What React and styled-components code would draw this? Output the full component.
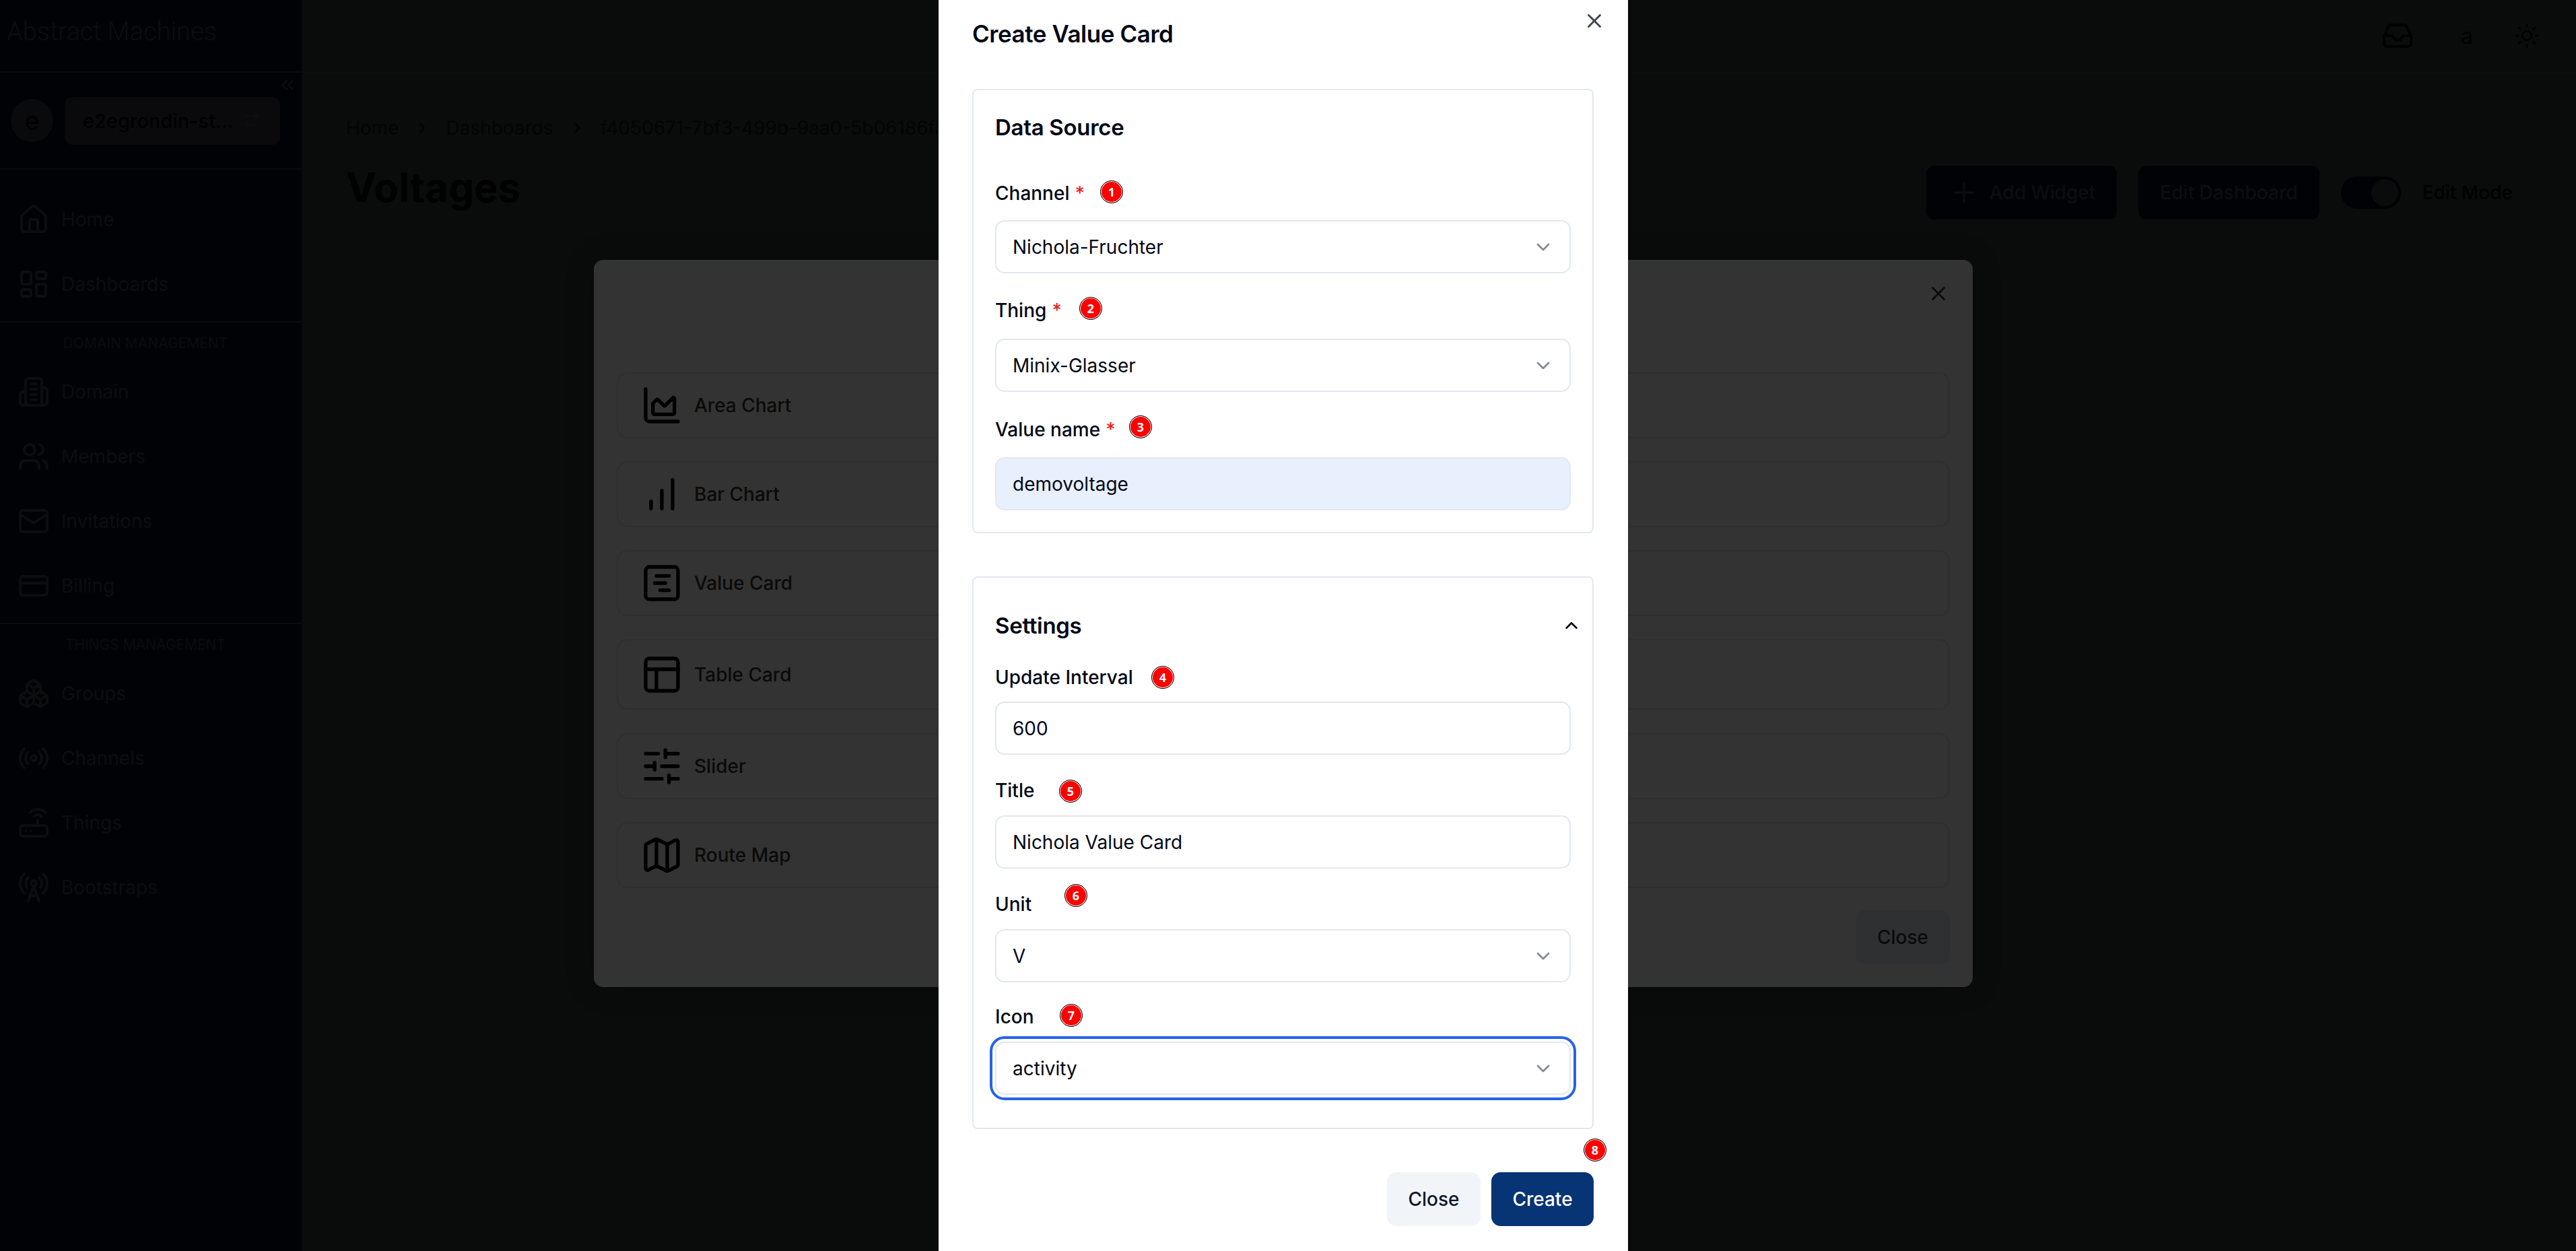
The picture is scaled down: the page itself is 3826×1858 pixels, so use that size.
import React from 'react';
import styled, { createGlobalStyle } from 'styled-components';
import {
  House, LayoutDashboard, Users, Mail, CreditCard, Boxes, Radio, Router, RadioTower, ChevronsLeft, ArrowRightLeft,
  Inbox, Sun, Plus, X, ChevronDown, ChevronUp, ChevronRight, ChartArea, SquareChartGantt,
  PanelsTopLeft, SlidersHorizontal, Map as MapIcon,
} from 'lucide-react';

const Global = createGlobalStyle`
  html, body { margin: 0; padding: 0; background: #0a0a0a; }
  * { box-sizing: border-box; }
  body { font-family: Inter, "Noto Sans", sans-serif; }
`;

const Shell = styled.div`
  position: relative;
  display: grid;
  grid-template-columns: 448px 1fr;
  width: 3826px;
  height: 1858px;
  overflow: hidden;
  background: #0a0b0b;
`;

/* ---------- sidebar ---------- */
const Sidebar = styled.aside`
  display: flex;
  flex-direction: column;
  background: #010206;
  color: #0c0d0f;
`;
const Brand = styled.div`
  height: 108px;
  padding: 23px 0 0 10px;
  border-bottom: 2px solid #0a0b0e;
  font-family: Roboto, sans-serif;
  font-size: 38px;
  font-weight: 300;
  line-height: 48px;
  white-space: nowrap;
  color: #0c0d0f;
`;
const CollapseRow = styled.div`
  display: flex;
  justify-content: flex-end;
  height: 36px;
  padding: 3px 6px 0 0;
`;
const Workspace = styled.div`
  display: flex;
  align-items: center;
  gap: 17px;
  height: 108px;
  padding: 0 32px 36px 16px;
  border-bottom: 2px solid #0a0b0e;
`;
const Avatar = styled.div`
  display: flex;
  align-items: center;
  justify-content: center;
  flex: none;
  width: 63px;
  height: 64px;
  border-radius: 50%;
  background: #0a0a0c;
  color: #000;
  font-size: 38px;
`;
const WorkspacePill = styled.div`
  display: flex;
  align-items: center;
  justify-content: space-between;
  flex: 1;
  height: 71px;
  padding: 0 28px 0 27px;
  border-radius: 12px;
  background: #0a0a0c;
  color: #000;
  font-size: 29px;
  font-weight: 500;
`;
const NavGroup = styled.nav`
  display: flex;
  flex-direction: column;
  padding: ${p => p.$top}px 0 ${p => p.$bottom}px;
  border-bottom: ${p => (p.$last ? 'none' : '2px solid #0a0b0e')};
`;
const NavItem = styled.div`
  display: flex;
  align-items: center;
  gap: 17px;
  height: 96px;
  padding-left: 26px;
  font-size: 28px;
  color: #0c0d0f;
`;
const NavHeading = styled.div`
  height: 32px;
  margin-bottom: 8px;
  text-align: center;
  font-size: 21px;
  line-height: 32px;
  padding-right: 16px;
  color: #0a0b0d;
`;

/* ---------- page behind the dialogs ---------- */
const Main = styled.main`
  display: flex;
  flex-direction: column;
`;
const TopBar = styled.header`
  display: flex;
  align-items: center;
  justify-content: flex-end;
  gap: 60px;
  height: 108px;
  padding-right: 53px;
  border-bottom: 2px solid #0c0d0d;
  color: #000;
  font-size: 32px;
`;
const UserInitial = styled.span`
  margin-left: 10px;
`;
const Content = styled.div`
  padding: 64px 66px 0;
`;
const Breadcrumbs = styled.div`
  display: flex;
  align-items: center;
  gap: 22px;
  height: 36px;
  font-size: 28px;
  color: #030404;
  white-space: nowrap;
`;
const TitleRow = styled.div`
  display: flex;
  align-items: flex-start;
  justify-content: space-between;
  margin-top: 38px;
  padding-right: 28px;
`;
const PageTitle = styled.h1`
  margin: 0;
  font-size: 60px;
  line-height: 64px;
  font-weight: 700;
  color: #000;
`;
const Actions = styled.div`
  display: flex;
  align-items: center;
  gap: 32px;
`;
const DarkButton = styled.div`
  display: flex;
  align-items: center;
  gap: 14px;
  height: 80px;
  padding: 0 32px;
  border-radius: 12px;
  background: #010206;
  color: #0c0d0f;
  font-size: 28px;
  font-weight: 500;
`;
const ToggleTrack = styled.div`
  display: flex;
  align-items: center;
  justify-content: flex-end;
  width: 89px;
  height: 48px;
  padding: 4px;
  border-radius: 24px;
  background: #010206;
`;
const ToggleKnob = styled.div`
  width: 40px;
  height: 40px;
  border-radius: 50%;
  background: #0a0b0b;
`;
const ToggleLabel = styled.span`
  font-size: 28px;
  font-weight: 500;
  color: #000;
`;

/* ---------- first dialog (dimmed) ---------- */
const ChooserDialog = styled.section`
  position: absolute;
  left: 882px;
  top: 386px;
  display: flex;
  flex-direction: column;
  width: 2048px;
  height: 1080px;
  padding: 167px 34px 0;
  border-radius: 14px;
  background: #333;
  box-shadow: 0 0 40px rgba(0, 0, 0, 0.25);
`;
const ChooserClose = styled.div`
  position: absolute;
  top: 33px;
  right: 34px;
  display: flex;
  color: #0a0a0a;
`;
const ChooserList = styled.div`
  display: flex;
  flex-direction: column;
`;
const ChooserRow = styled.div`
  display: flex;
  align-items: center;
  gap: 16px;
  height: ${p => p.$h || 98}px;
  margin-bottom: ${p => p.$mb || 34}px;
  padding-left: 33px;
  border: 2px solid #2f2f2f;
  border-radius: 16px;
  font-size: 28px;
  font-weight: 450;
  color: #0a0a0a;
`;
const ChooserFooter = styled.div`
  display: flex;
  justify-content: flex-end;
  margin-top: -1px;
`;
const ChooserButton = styled.div`
  display: flex;
  align-items: center;
  justify-content: center;
  width: 140px;
  height: 80px;
  border-radius: 14px;
  background: #2f3032;
  color: #0a0a0a;
  font-size: 28px;
  font-weight: 450;
`;

/* ---------- top dialog ---------- */
const Dialog = styled.section`
  position: absolute;
  left: 1394px;
  top: 0;
  display: flex;
  flex-direction: column;
  width: 1024px;
  height: 1858px;
  padding: 26px 51px 0 50px;
  background: #fff;
  color: #020817;
`;
const DialogClose = styled.div`
  position: absolute;
  top: 14px;
  right: 33px;
  display: flex;
  color: #3c4350;
`;
const DialogTitle = styled.h2`
  margin: 0 0 56px;
  height: 50px;
  font-size: 35px;
  line-height: 48px;
  font-weight: 600;
  letter-spacing: -0.45px;
`;
const Card = styled.div`
  display: flex;
  flex-direction: column;
  height: ${p => p.$h}px;
  margin-bottom: 64px;
  padding: ${p => p.$pt}px 32px 0;
  border: 2px solid #e2e8f0;
  border-radius: 8px;
`;
const CardHeader = styled.div`
  display: flex;
  align-items: center;
  justify-content: space-between;
  height: 42px;
  margin-right: -24px;
  padding-right: 8px;
`;
const CardTitle = styled.h3`
  margin: 0;
  font-size: 33px;
  font-weight: 600;
  letter-spacing: -0.3px;
`;
const Field = styled.div`
  display: flex;
  flex-direction: column;
  margin-top: ${p => p.$mt}px;
`;
const LabelRow = styled.div`
  position: relative;
  height: ${p => p.$h}px;
  font-size: 28px;
  font-weight: 450;
  line-height: 36px;
`;
const Required = styled.span`
  margin-left: 8px;
  color: #ef1f1f;
`;
const Badge = styled.span`
  position: absolute;
  left: ${p => p.$x}px;
  top: ${p => p.$y}px;
  display: flex;
  align-items: center;
  justify-content: center;
  width: 34px;
  height: 34px;
  border-radius: 50%;
  background: #f00;
  border: 1px solid #000;
  box-shadow: inset 0 0 0 1px #fff;
  color: #fff;
  font-family: "Open Sans", sans-serif;
  font-size: 18px;
  font-weight: 700;
  line-height: 1;
`;
const Control = styled.div`
  display: flex;
  align-items: center;
  justify-content: space-between;
  height: 79px;
  padding: 0 23px 0 24px;
  border: 2px solid #e2e8f0;
  border-radius: 14px;
  background: ${p => (p.$filled ? '#e8f0fe' : '#fff')};
  font-size: 28px;
  ${p => p.$focus && 'outline: 4px solid #2563eb; outline-offset: 4px;'}
`;
const Chevron = styled(ChevronDown)`
  color: #858a92;
  flex: none;
`;
const Footer = styled.div`
  position: relative;
  display: flex;
  justify-content: flex-end;
  gap: 16px;
`;
const FooterButton = styled.div`
  display: flex;
  align-items: center;
  justify-content: center;
  width: ${p => p.$w}px;
  height: 80px;
  border-radius: 14px;
  background: ${p => (p.$primary ? '#073474' : '#f1f5f9')};
  color: ${p => (p.$primary ? '#fff' : '#0f172a')};
  font-size: 28px;
  font-weight: 450;
`;

const Glyph = ({ size = 48, color = 'currentColor', children }) => (
  <svg width={size} height={size} viewBox="0 0 24 24" fill="none" stroke={color} strokeWidth="2" strokeLinecap="round" strokeLinejoin="round">
    {children}
  </svg>
);

/* The older "building-2": tower with two wings and four floors. */
const Building = () => (
  <Glyph>
    <path d="M6 22V4a2 2 0 0 1 2-2h8a2 2 0 0 1 2 2v18Z" />
    <path d="M6 12H4a2 2 0 0 0-2 2v6a2 2 0 0 0 2 2h2" />
    <path d="M18 9h2a2 2 0 0 1 2 2v9a2 2 0 0 1-2 2h-2" />
    <path d="M10 6h4" /><path d="M10 10h4" /><path d="M10 14h4" /><path d="M10 18h4" />
  </Glyph>
);

/* Three rising bars spaced 6 units apart. */
const Bars = ({ size, color }) => (
  <Glyph size={size} color={color}>
    <path d="M6 20v-4" /><path d="M12 20V10" /><path d="M18 20V4" />
  </Glyph>
);

const widgets = [
  { label: 'Area Chart', Icon: ChartArea },
  { label: 'Bar Chart', Icon: Bars },
  { label: 'Value Card', Icon: SquareChartGantt },
  { label: 'Table Card', Icon: PanelsTopLeft, h: 105, mb: 35 },
  { label: 'Slider', Icon: SlidersHorizontal },
  { label: 'Route Map', Icon: MapIcon },
];

const Dropdown = ({ value, focus }) => (
  <Control $focus={focus}>
    {value}
    <Chevron size={32} />
  </Control>
);

export default function App() {
  return (
    <Shell>
      <Global />
      <Sidebar>
        <Brand>Abstract Machines</Brand>
        <CollapseRow><ChevronsLeft size={30} /></CollapseRow>
        <Workspace>
          <Avatar>e</Avatar>
          <WorkspacePill>e2egrondin-st... <ArrowRightLeft size={30} color="#0c0d0f" /></WorkspacePill>
        </Workspace>
        <NavGroup $top={26} $bottom={7}>
          <NavItem><House size={48} />Home</NavItem>
          <NavItem><LayoutDashboard size={48} />Dashboards</NavItem>
        </NavGroup>
        <NavGroup $top={15} $bottom={7}>
          <NavHeading>DOMAIN MANAGEMENT</NavHeading>
          <NavItem><Building />Domain</NavItem>
          <NavItem><Users size={48} />Members</NavItem>
          <NavItem><Mail size={48} />Invitations</NavItem>
          <NavItem><CreditCard size={48} />Billing</NavItem>
        </NavGroup>
        <NavGroup $top={15} $bottom={0} $last>
          <NavHeading>THINGS MANAGEMENT</NavHeading>
          <NavItem><Boxes size={48} />Groups</NavItem>
          <NavItem><Radio size={48} />Channels</NavItem>
          <NavItem><Router size={48} />Things</NavItem>
          <NavItem><RadioTower size={48} />Bootstraps</NavItem>
        </NavGroup>
      </Sidebar>

      <Main>
        <TopBar>
          <Inbox size={48} />
          <UserInitial>a</UserInitial>
          <Sun size={40} strokeWidth={1.5} />
        </TopBar>
        <Content>
          <Breadcrumbs>
            <span>Home</span><ChevronRight size={26} /><span>Dashboards</span><ChevronRight size={26} /><span>f4050671-7bf3-499b-9aa0-5b06186fa1c2</span>
          </Breadcrumbs>
          <TitleRow>
            <PageTitle>Voltages</PageTitle>
            <Actions>
              <DarkButton><Plus size={48} strokeWidth={1.5} />Add Widget</DarkButton>
              <DarkButton>Edit Dashboard</DarkButton>
              <ToggleTrack><ToggleKnob /></ToggleTrack>
              <ToggleLabel>Edit Mode</ToggleLabel>
            </Actions>
          </TitleRow>
        </Content>
      </Main>

      <ChooserDialog>
        <ChooserClose><X size={34} /></ChooserClose>
        <ChooserList>
          {widgets.map(({ label, Icon, h, mb }) => (
            <ChooserRow key={label} $h={h} $mb={mb}>
              <Icon size={64} color="#000" />
              {label}
            </ChooserRow>
          ))}
        </ChooserList>
        <ChooserFooter><ChooserButton>Close</ChooserButton></ChooserFooter>
      </ChooserDialog>

      <Dialog>
        <DialogClose><X size={34} /></DialogClose>
        <DialogTitle>Create Value Card</DialogTitle>

        <Card $h={660} $pt={34}>
          <CardHeader><CardTitle>Data Source</CardTitle></CardHeader>
          <Field $mt={59}>
            <LabelRow $h={58}>Channel<Required>*</Required><Badge $x={156} $y={-1}>1</Badge></LabelRow>
            <Dropdown value="Nichola-Fruchter" />
          </Field>
          <Field $mt={37}>
            <LabelRow $h={60}>Thing<Required>*</Required><Badge $x={125} $y={-2}>2</Badge></LabelRow>
            <Dropdown value="Minix-Glasser" />
          </Field>
          <Field $mt={38}>
            <LabelRow $h={59}>Value name<Required>*</Required><Badge $x={199} $y={-3}>3</Badge></LabelRow>
            <Control $filled>demovoltage</Control>
          </Field>
        </Card>

        <Card $h={821} $pt={50}>
          <CardHeader>
            <CardTitle>Settings</CardTitle>
            <ChevronUp size={30} />
          </CardHeader>
          <Field $mt={38}>
            <LabelRow $h={54}>Update Interval<Badge $x={232} $y={1}>4</Badge></LabelRow>
            <Control>600</Control>
          </Field>
          <Field $mt={35}>
            <LabelRow $h={55}>Title<Badge $x={95} $y={2}>5</Badge></LabelRow>
            <Control>Nichola Value Card</Control>
          </Field>
          <Field $mt={35}>
            <LabelRow $h={55}>Unit<Badge $x={103} $y={-12}>6</Badge></LabelRow>
            <Dropdown value="V" />
          </Field>
          <Field $mt={33}>
            <LabelRow $h={55}>Icon<Badge $x={96} $y={-1}>7</Badge></LabelRow>
            <Dropdown value="activity" focus />
          </Field>
        </Card>

        <Footer>
          <Badge $x={908} $y={-50}>8</Badge>
          <FooterButton $w={139}>Close</FooterButton>
          <FooterButton $w={152} $primary>Create</FooterButton>
        </Footer>
      </Dialog>
    </Shell>
  );
}
